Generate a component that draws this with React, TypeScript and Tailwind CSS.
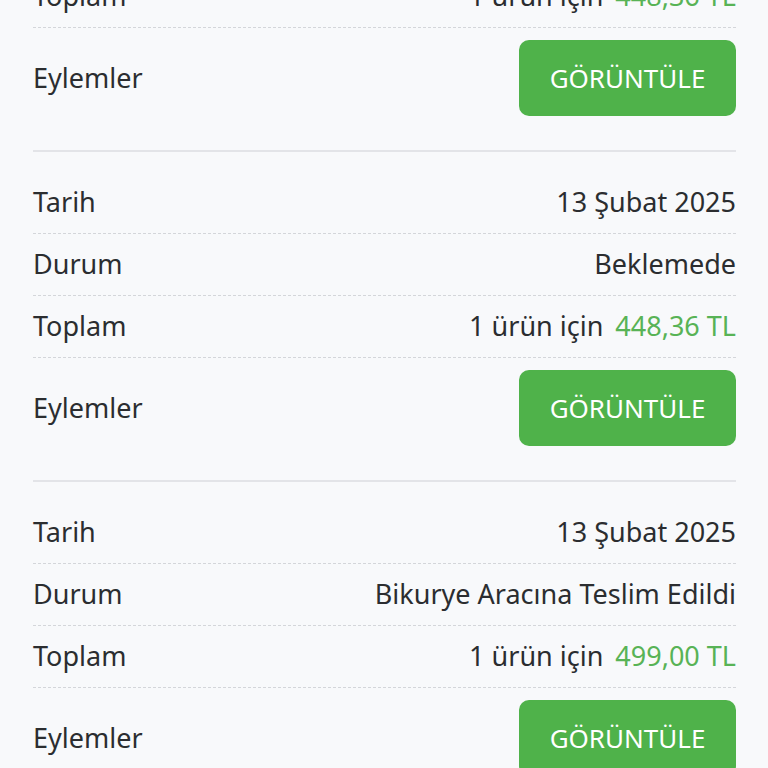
import React from 'react';

interface Order {
  date: string;
  status: string;
  count: number;
  total: string;
}

const orders: Order[] = [
  { date: '13 Şubat 2025', status: 'Beklemede', count: 1, total: '448,36 TL' },
  { date: '13 Şubat 2025', status: 'Beklemede', count: 1, total: '448,36 TL' },
  { date: '13 Şubat 2025', status: 'Bikurye Aracına Teslim Edildi', count: 1, total: '499,00 TL' },
];

const Row: React.FC<{ label: string; children: React.ReactNode }> = ({ label, children }) => (
  <div className="flex h-[62px] items-center justify-between border-b border-dashed border-[#d4d6da]">
    <span>{label}</span>
    <span className="flex items-center">{children}</span>
  </div>
);

const OrderCard: React.FC<{ order: Order }> = ({ order }) => (
  <div className="border-t-2 border-[#e3e4e8] pt-[20px]">
    <Row label="Tarih">{order.date}</Row>
    <Row label="Durum">{order.status}</Row>
    <Row label="Toplam">
      <span>{order.count} ürün için</span>
      <span className="ml-[12px] text-[#58b356]">{order.total}</span>
    </Row>
    <div className="flex items-center justify-between pt-[12px] pb-[34px]">
      <span>Eylemler</span>
      <button className="flex h-[76px] w-[217px] items-center justify-center rounded-[10px] bg-[#4fb24a] text-[26px] text-white">
        GÖRÜNTÜLE
      </button>
    </div>
  </div>
);

export default function App() {
  return (
    <div
      className="h-[768px] overflow-hidden bg-[#f8f9fb] pl-[33px] pr-[32px] text-[27px] text-[#2b2d30]"
      style={{ fontFamily: '"Noto Sans", sans-serif' }}
    >
      <div className="-mt-[180px]">
        {orders.map((o, i) => (
          <OrderCard key={i} order={o} />
        ))}
      </div>
    </div>
  );
}
